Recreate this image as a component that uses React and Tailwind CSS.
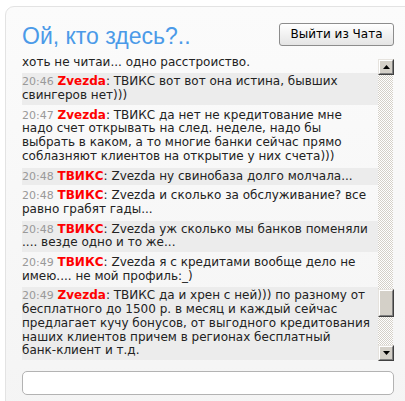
const messages = [
  { lines: ['хоть не читаи... одно расстроиство.'] },
  { time: '20:46', nick: 'Zvezda', lines: ['ТВИКС вот вот она истина, бывших', 'свингеров нет)))'] },
  {
    time: '20:47',
    nick: 'Zvezda',
    lines: [
      'ТВИКС да нет не кредитование мне',
      'надо счет открывать на след. неделе, надо бы',
      'выбрать в каком, а то многие банки сейчас прямо',
      'соблазняют клиентов на открытие у них счета)))',
    ],
  },
  { time: '20:48', nick: 'ТВИКС', lines: ['Zvezda ну свинобаза долго молчала...'] },
  { time: '20:48', nick: 'ТВИКС', lines: ['Zvezda и сколько за обслуживание? все', 'равно грабят гады...'] },
  { time: '20:48', nick: 'ТВИКС', lines: ['Zvezda уж сколько мы банков поменяли', '.... везде одно и то же...'] },
  { time: '20:49', nick: 'ТВИКС', lines: ['Zvezda я с кредитами вообще дело не', 'имею.... не мой профиль:_)'] },
  {
    time: '20:49',
    nick: 'Zvezda',
    lines: [
      'ТВИКС да и хрен с ней))) по разному от',
      'бесплатного до 1500 р. в месяц и каждый сейчас',
      'предлагает кучу бонусов, от выгодного кредитования',
      'наших клиентов причем в регионах бесплатный',
      'банк-клиент и т.д.',
    ],
  },
];

function Message({ msg, shaded }) {
  return (
    <div className={`shrink-0 py-[2px] leading-[13.7px] whitespace-nowrap ${shaded ? 'bg-[#ececec]' : ''}`}>
      {msg.lines.map((line, i) => (
        <div key={i}>
          {i === 0 && msg.time && (
            <>
              <span className="text-[11px] text-[#999999]">{msg.time}</span>{' '}
              <span className="font-bold text-[#ff0000]">{msg.nick}</span>:{' '}
            </>
          )}
          {line}
        </div>
      ))}
    </div>
  );
}

function ScrollButton({ up }) {
  return (
    <div className="h-[16px] w-[16px] border border-t-[#e6e3de] border-l-[#e6e3de] border-r-[#404040] border-b-[#404040] bg-[#d4d0c8]">
      <div className="flex h-full w-full items-center justify-center border border-t-white border-l-white border-r-[#808080] border-b-[#808080]">
        <svg width="7" height="4" viewBox="0 0 7 4">
          {up ? <path d="M3.5 0 L7 4 L0 4 Z" fill="#000" /> : <path d="M0 0 L7 0 L3.5 4 Z" fill="#000" />}
        </svg>
      </div>
    </div>
  );
}

export default function App() {
  return (
    <div className="h-[401px] w-[405px] overflow-hidden bg-white" style={{ fontFamily: '"DejaVu Sans", Verdana, sans-serif' }}>
      <div className="ml-[5px] mt-[6px] h-[420px] w-[430px] rounded-tl-[9px] border border-[#e3e3e3] bg-gradient-to-b from-[#fbfbfb] to-[#f4f4f4] pl-[16px] pt-[16px]">
        <div className="flex h-[23px] w-[372px] items-start justify-between">
          <h1 className="mt-[3px] text-[23px] leading-[20px] text-[#4b9ae8]" style={{ fontFamily: '"Liberation Sans", Arial, sans-serif' }}>
            Ой, кто здесь?..
          </h1>
          <button className="h-[23px] w-[115px] rounded-[3px] border border-[#8c8c8c] bg-gradient-to-b from-white to-[#e4e4e4] text-[12px] leading-[21px] text-black">
            Выйти из Чата
          </button>
        </div>

        <div className="mt-[10px] flex h-[304px] w-[371px]">
          <div className="flex h-full w-[356px] flex-col justify-end gap-[2px] overflow-hidden text-[12px] text-[#222222]">
            {messages.map((m, i) => (
              <Message key={i} msg={m} shaded={i % 2 === 1} />
            ))}
          </div>
          <div className="mt-[3px] flex h-[302px] w-[15px] shrink-0 flex-col bg-[repeating-conic-gradient(#d4d0c8_0_25%,#ffffff_0_50%)] bg-[length:2px_2px]">
            <ScrollButton up />
            <div className="flex-1">
              <div className="mt-[214px] h-[28px] w-[16px] border border-t-[#e6e3de] border-l-[#e6e3de] border-r-[#404040] border-b-[#404040] bg-[#d4d0c8]">
                <div className="h-full w-full border border-t-white border-l-white border-r-[#808080] border-b-[#808080]" />
              </div>
            </div>
            <ScrollButton />
          </div>
        </div>

        <input className="mt-[11px] block h-[24px] w-[372px] rounded-[5px] border border-[#b3b3b3] bg-white px-2 text-[12px] outline-none" />
      </div>
    </div>
  );
}
